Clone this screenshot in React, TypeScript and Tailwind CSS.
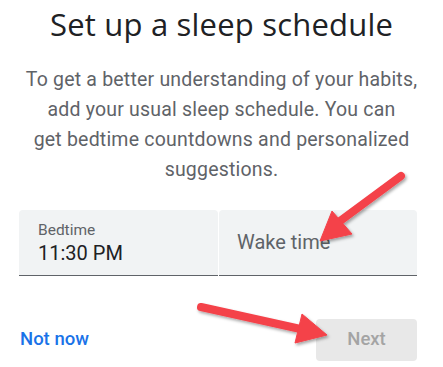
export default function App() {
  return (
    <div className="relative w-[443px] h-[367px] bg-white overflow-hidden" style={{ fontFamily: "Roboto, 'Liberation Sans', sans-serif" }}>
      <div className="flex flex-col items-center">
        <h1 className="mt-[5px] text-[31px] leading-[38px] text-[#202124] tracking-[0.2px]" style={{ fontFamily: "'Open Sans', Roboto, sans-serif" }}>
          Set up a sleep schedule
        </h1>
        <p className="mt-[22px] text-center text-[19.5px] leading-[30px] text-[#5f6368] tracking-[0.2px] whitespace-nowrap">
          To get a better understanding of your habits,
          <br />
          add your usual sleep schedule. You can
          <br />
          get bedtime countdowns and personalized
          <br />
          suggestions.
        </p>
      </div>

      <div className="ml-[19px] mr-[26px] mt-[25px] flex gap-px">
        <div className="flex-1 h-[66px] bg-[#f1f3f4] rounded-t-[4px] border-b border-[#5f6368] pl-[19px] pt-[12px]">
          <div className="text-[15.5px] leading-[17px] text-[#5f6368]">Bedtime</div>
          <div className="mt-[2px] text-[20px] leading-[24px] text-[#202124]">11:30 PM</div>
        </div>
        <div className="flex-1 h-[66px] bg-[#f1f3f4] rounded-t-[4px] border-b border-[#5f6368] pl-[18px] flex items-center pb-[2px]">
          <span className="text-[20px] text-[#5f6368]">Wake time</span>
        </div>
      </div>

      <div className="ml-[19px] mr-[26px] mt-[43px] flex items-center justify-between">
        <button className="pl-px text-[18.5px] font-medium text-[#1a73e8]">Not now</button>
        <button className="w-[101px] h-[42px] rounded-[4px] bg-[#e8e8e8] text-[18.5px] font-medium text-[#a4a4a4]">Next</button>
      </div>

      <svg className="absolute inset-0 pointer-events-none" width="443" height="367">
        <defs>
          <filter id="sh" x="-20%" y="-20%" width="140%" height="140%">
            <feDropShadow dx="1.5" dy="2" stdDeviation="1.5" floodColor="#000" floodOpacity="0.35" />
          </filter>
        </defs>
        <g filter="url(#sh)" fill="#f4424a" stroke="#f4424a">
          <line x1="401" y1="176" x2="336" y2="224" strokeWidth="8" strokeLinecap="round" />
          <polygon points="320,241 332,211 352,234" strokeWidth="1" strokeLinejoin="round" />
          <line x1="201" y1="307" x2="305" y2="330" strokeWidth="8" strokeLinecap="round" />
          <polygon points="327,335 302,314 295,343" strokeWidth="1" strokeLinejoin="round" />
        </g>
      </svg>
    </div>
  );
}
